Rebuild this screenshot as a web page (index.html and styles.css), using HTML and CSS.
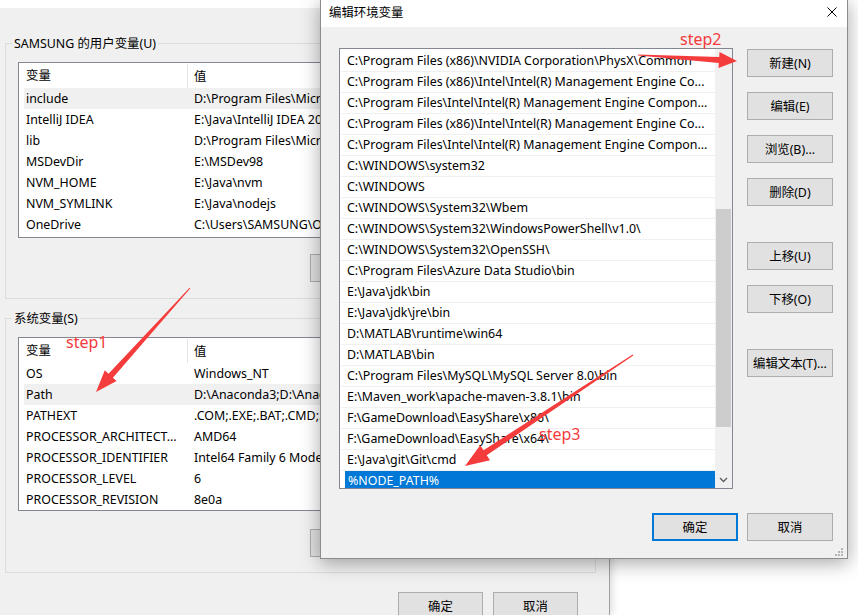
FILE: index.html
```html
<!DOCTYPE html>
<html lang="zh-CN">
<head>
  <meta charset="UTF-8" />
  <title>编辑环境变量</title>
  <link rel="stylesheet" href="styles.css">
</head>
<body>
<div class="desk">
  <div class="win">
    <div class="win-top"></div>
    <fieldset class="group">
      <legend>SAMSUNG 的用户变量(U)</legend>
      <div class="vars">
        <div class="vars-head"><span class="c1">变量</span><span class="c2">值</span></div>
        <div class="var-row hl"><span class="c1">include</span><span class="c2">D:\Program Files\Microsoft Visual Studio\VC98\include</span></div>
        <div class="var-row"><span class="c1">IntelliJ IDEA</span><span class="c2">E:\Java\IntelliJ IDEA 2021.1\bin;</span></div>
        <div class="var-row"><span class="c1">lib</span><span class="c2">D:\Program Files\Microsoft Visual Studio\VC98\lib</span></div>
        <div class="var-row"><span class="c1">MSDevDir</span><span class="c2">E:\MSDev98</span></div>
        <div class="var-row"><span class="c1">NVM_HOME</span><span class="c2">E:\Java\nvm</span></div>
        <div class="var-row"><span class="c1">NVM_SYMLINK</span><span class="c2">E:\Java\nodejs</span></div>
        <div class="var-row"><span class="c1">OneDrive</span><span class="c2">C:\Users\SAMSUNG\OneDrive</span></div>
      </div>
      <div class="grp-btns"><button>新建(N)...</button><button>编辑(E)...</button><button>删除(D)</button></div>
    </fieldset>
    <fieldset class="group sys">
      <legend>系统变量(S)</legend>
      <div class="vars">
        <div class="vars-head"><span class="c1">变量</span><span class="c2">值</span></div>
        <div class="var-row"><span class="c1">OS</span><span class="c2">Windows_NT</span></div>
        <div class="var-row hl"><span class="c1">Path</span><span class="c2">D:\Anaconda3;D:\Anaconda3\Library\mingw-w64\bin;</span></div>
        <div class="var-row"><span class="c1">PATHEXT</span><span class="c2">.COM;.EXE;.BAT;.CMD;.VBS;.VBE;.JS;.JSE</span></div>
        <div class="var-row"><span class="c1">PROCESSOR_ARCHITECT...</span><span class="c2">AMD64</span></div>
        <div class="var-row"><span class="c1">PROCESSOR_IDENTIFIER</span><span class="c2">Intel64 Family 6 Model 142 Stepping 10</span></div>
        <div class="var-row"><span class="c1">PROCESSOR_LEVEL</span><span class="c2">6</span></div>
        <div class="var-row"><span class="c1">PROCESSOR_REVISION</span><span class="c2">8e0a</span></div>
      </div>
      <div class="grp-btns"><button>新建(W)...</button><button>编辑(I)...</button><button>删除(L)</button></div>
    </fieldset>
    <div class="win-foot"><button>确定</button><button>取消</button></div>
  </div>

  <div class="dlg">
    <div class="dlg-title">
      <span>编辑环境变量</span>
      <svg class="close" width="10" height="10" viewBox="0 0 10 10"><path d="M0.5 0.5L9.5 9.5M9.5 0.5L0.5 9.5" stroke="#000" stroke-width="1"/></svg>
    </div>
    <div class="dlg-body">
      <div class="paths">
        <div class="path-list">
          <div class="path">C:\Program Files (x86)\NVIDIA Corporation\PhysX\Common</div>
          <div class="path">C:\Program Files (x86)\Intel\Intel(R) Management Engine Co...</div>
          <div class="path">C:\Program Files\Intel\Intel(R) Management Engine Compon...</div>
          <div class="path">C:\Program Files (x86)\Intel\Intel(R) Management Engine Co...</div>
          <div class="path">C:\Program Files\Intel\Intel(R) Management Engine Compon...</div>
          <div class="path">C:\WINDOWS\system32</div>
          <div class="path">C:\WINDOWS</div>
          <div class="path">C:\WINDOWS\System32\Wbem</div>
          <div class="path">C:\WINDOWS\System32\WindowsPowerShell\v1.0\</div>
          <div class="path">C:\WINDOWS\System32\OpenSSH\</div>
          <div class="path">C:\Program Files\Azure Data Studio\bin</div>
          <div class="path">E:\Java\jdk\bin</div>
          <div class="path">E:\Java\jdk\jre\bin</div>
          <div class="path">D:\MATLAB\runtime\win64</div>
          <div class="path">D:\MATLAB\bin</div>
          <div class="path">C:\Program Files\MySQL\MySQL Server 8.0\bin</div>
          <div class="path">E:\Maven_work\apache-maven-3.8.1\bin</div>
          <div class="path">F:\GameDownload\EasyShare\x86\</div>
          <div class="path">F:\GameDownload\EasyShare\x64\</div>
          <div class="path">E:\Java\git\Git\cmd</div>
          <div class="path selected">%NODE_PATH%</div>
        </div>
        <div class="scroll">
          <div class="sb-btn"><svg width="9" height="6" viewBox="0 0 9 6"><path d="M1 5L4.5 1.5L8 5" fill="none" stroke="#606060" stroke-width="1.4"/></svg></div>
          <div class="thumb"></div>
          <div class="sb-fill"></div>
          <div class="sb-btn"><svg width="9" height="6" viewBox="0 0 9 6"><path d="M1 1L4.5 4.5L8 1" fill="none" stroke="#606060" stroke-width="1.4"/></svg></div>
        </div>
      </div>
      <div class="side">
        <button>新建(N)</button>
        <button>编辑(E)</button>
        <button>浏览(B)...</button>
        <button>删除(D)</button>
        <button class="far">上移(U)</button>
        <button>下移(O)</button>
        <button class="far">编辑文本(T)...</button>
      </div>
      <div class="dlg-foot">
        <button class="default">确定</button>
        <button>取消</button>
      </div>
    </div>
    <svg class="grip" width="8" height="8" viewBox="0 0 8 8" fill="#b4b4b4">
      <rect x="6" y="0" width="2" height="2"/>
      <rect x="3" y="3" width="2" height="2"/><rect x="6" y="3" width="2" height="2"/>
      <rect x="0" y="6" width="2" height="2"/><rect x="3" y="6" width="2" height="2"/><rect x="6" y="6" width="2" height="2"/>
    </svg>
  </div>

  <svg class="marks" width="858" height="615" viewBox="0 0 858 615">
    <polygon points="190.4,288.3 112.9,377.7 116.6,381.1 96,392 104.8,370.3 108.5,373.7 189.6,287.7"/>
    <polygon points="638,54.4 719.2,56.9 719.5,51.9 737,61 718.5,67.9 718.8,62.9 638,55.6"/>
    <polygon points="633.3,355.4 486.7,455.3 490,460.3 465,466 480.2,445.3 483.5,450.3 632.7,354.6"/>
    <text x="66" y="348">step1</text>
    <text x="680" y="45">step2</text>
    <text x="539" y="440">step3</text>
  </svg>
</div>
</body>
</html>
```

FILE: styles.css
```css
body {
  margin: 0;
  width: 858px;
  height: 615px;
  overflow: hidden;
  background: #fff;
  font-family: "Noto Sans", "Noto Sans CJK SC", sans-serif;
  font-size: 12.4px;
  color: #000;
}
button {
  font: inherit;
  color: #000;
  background: #e1e1e1;
  border: 1px solid #adadad;
  padding: 0;
  margin: 0;
  width: 85px;
  height: 28px;
  box-sizing: border-box;
}
.desk {
  position: relative;
  width: 858px;
  height: 615px;
}

/* background window */
.win {
  width: 609px;
  height: 615px;
  background: #f0f0f0;
  border-right: 1px solid #a0a0a0;
  box-shadow: 2px 0 8px rgba(0,0,0,0.15);
  overflow: hidden;
}
.win-top {
  height: 8px;
  background: #fff;
}
.group {
  margin: 27px 13px 0 5px;
  padding: 10px 10px 16px 6px;
  border: 1px solid #dcdcdc;
  min-width: 0;
}
.group legend {
  padding: 0 2px;
  line-height: 17px;
}
.group.sys {
  margin-top: 11px;
  padding-bottom: 15px;
}
.vars {
  margin-left: 6px;
  height: 176px;
  box-sizing: border-box;
  background: #fff;
  border: 1px solid #828790;
  overflow: hidden;
}
.sys .vars {
  height: 174px;
}
.vars-head {
  display: flex;
  height: 25px;
  align-items: center;
}
.vars-head .c1 {
  width: 161px;
  padding-left: 7px;
  border-right: 1px solid #e5e5e5;
  line-height: 24px;
}
.vars-head .c2 {
  padding-left: 6px;
}
.var-row {
  display: flex;
  height: 21px;
  align-items: center;
  margin-left: 5px;
  white-space: nowrap;
}
.var-row.hl {
  background: #f0f0f0;
}
.var-row .c1 {
  width: 161px;
  padding-left: 2px;
  overflow: hidden;
}
.var-row .c2 {
  padding-left: 7px;
}
.grp-btns {
  display: flex;
  justify-content: flex-end;
  gap: 10px;
  margin-top: 16px;
}
.sys .grp-btns {
  margin-top: 18px;
}
.win-foot {
  display: flex;
  justify-content: flex-end;
  gap: 10px;
  margin-top: 19px;
  padding-right: 31px;
}

/* edit dialog */
.dlg {
  position: absolute;
  left: 320px;
  top: -1px;
  width: 528px;
  height: 560px;
  box-sizing: border-box;
  background: #f0f0f0;
  border: 1px solid #8c8c8c;
  box-shadow: 0 4px 18px rgba(0,0,0,0.35);
}
.dlg-title {
  height: 27px;
  box-sizing: border-box;
  padding: 0 10px 3px 8px;
  background: #fff;
  display: flex;
  align-items: center;
  justify-content: space-between;
}
.dlg-body {
  display: grid;
  grid-template-columns: 1fr 86px;
  column-gap: 14px;
  padding: 21px 14px 0 18px;
}
.paths {
  height: 441px;
  box-sizing: border-box;
  border: 1px solid #828790;
  background: #fff;
  display: flex;
  padding-left: 1px;
}
.path-list {
  flex: 1;
  min-width: 0;
  overflow: hidden;
  padding-top: 2px;
}
.path {
  height: 21px;
  box-sizing: border-box;
  border-bottom: 1px solid #f0f0f0;
  padding-left: 6px;
  line-height: 20px;
  white-space: nowrap;
  overflow: hidden;
}
.path.selected {
  margin-left: 4px;
  padding-left: 3px;
  background: #0078d7;
  border-bottom-color: #0078d7;
  color: #fff;
}
.scroll {
  width: 17px;
  background: #f0f0f0;
  display: flex;
  flex-direction: column;
}
.sb-btn {
  height: 17px;
  display: flex;
  align-items: center;
  justify-content: center;
}
.thumb {
  margin: 143px 1px 0;
  height: 218px;
  background: #cdcdcd;
}
.sb-fill {
  flex: 1;
}
.side {
  display: flex;
  flex-direction: column;
  padding-top: 1px;
}
.side button {
  width: 86px;
  margin-top: 15px;
}
.side button:first-child {
  margin-top: 0;
}
.side button.far {
  margin-top: 36px;
}
.dlg-foot {
  grid-column: 1 / -1;
  display: flex;
  justify-content: flex-end;
  gap: 9px;
  margin-top: 24px;
}
.dlg-foot button {
  width: 86px;
}
.dlg-foot .default {
  border: 2px solid #0078d7;
}
.grip {
  position: absolute;
  right: 4px;
  bottom: 2px;
}

/* annotations */
.marks {
  position: absolute;
  left: 0;
  top: 0;
  pointer-events: none;
}
.marks polygon {
  fill: #f43c3c;
}
.marks text {
  fill: #f43c3c;
  font-family: "Noto Sans", sans-serif;
  font-size: 16px;
}
```
